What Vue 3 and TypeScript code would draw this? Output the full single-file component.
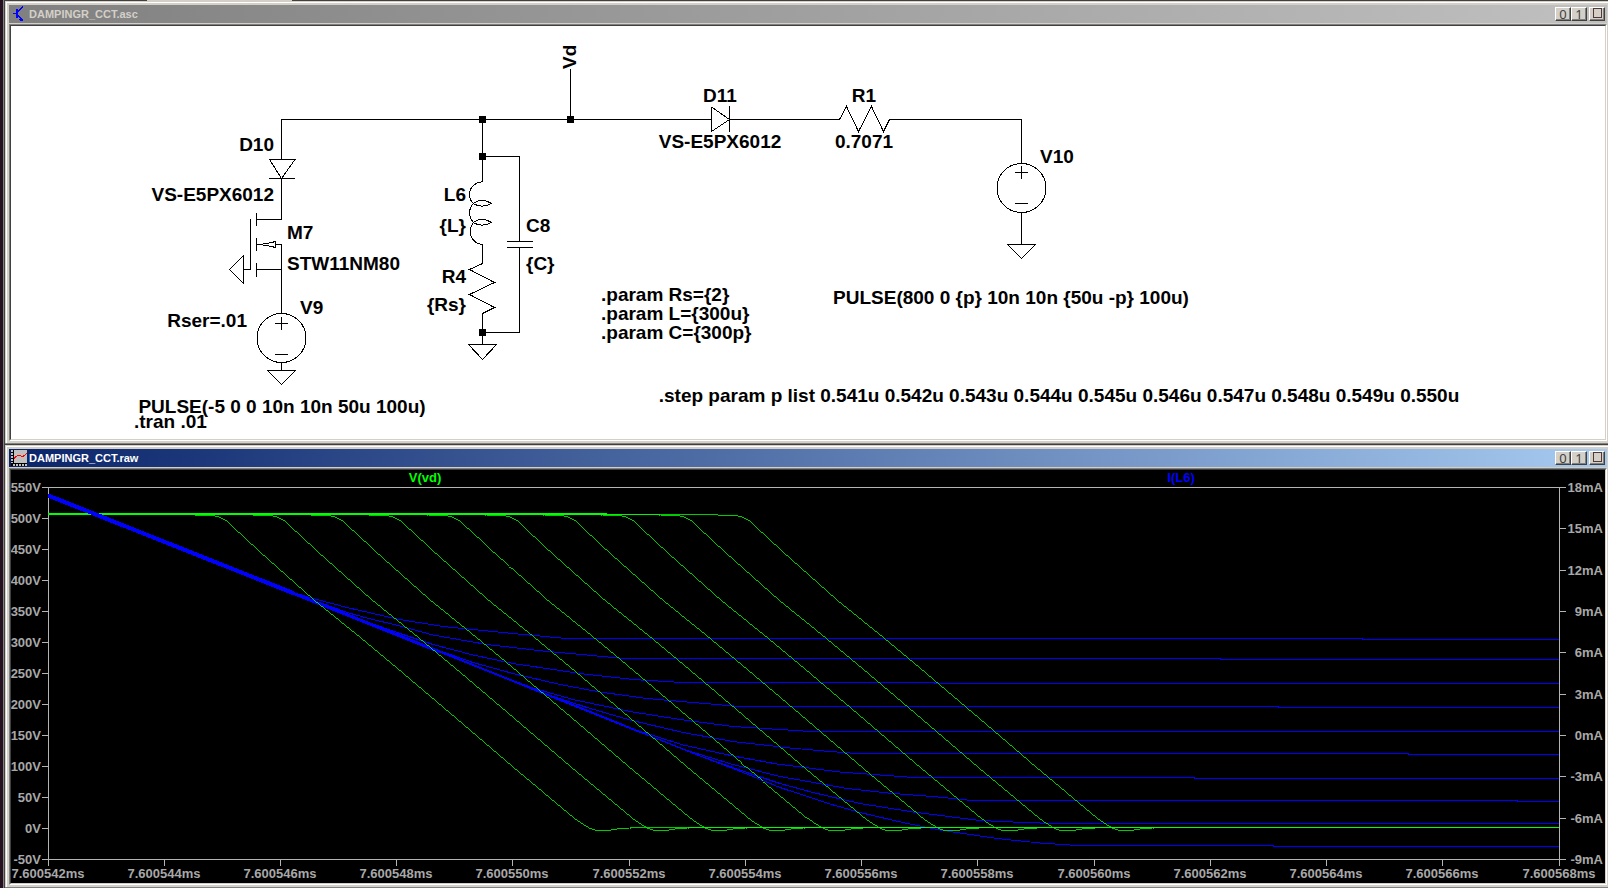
<script setup lang="ts">
type Point = [number, number]
type Anchor = 'start' | 'middle' | 'end'

interface Label {
  text: string
  x: number
  y: number
  anchor: Anchor
}

const labels: Label[] = [
  { text: 'D10', x: 274, y: 151, anchor: 'end' },
  { text: 'VS-E5PX6012', x: 274, y: 201, anchor: 'end' },
  { text: 'M7', x: 287, y: 239, anchor: 'start' },
  { text: 'STW11NM80', x: 287, y: 270, anchor: 'start' },
  { text: 'V9', x: 300, y: 314, anchor: 'start' },
  { text: 'Rser=.01', x: 247, y: 327, anchor: 'end' },
  { text: 'PULSE(-5 0 0 10n 10n 50u 100u)', x: 282, y: 413, anchor: 'middle' },
  { text: '.tran .01', x: 134, y: 428, anchor: 'start' },
  { text: 'D11', x: 720, y: 102, anchor: 'middle' },
  { text: 'VS-E5PX6012', x: 720, y: 148, anchor: 'middle' },
  { text: 'L6', x: 466, y: 201, anchor: 'end' },
  { text: '{L}', x: 466, y: 232, anchor: 'end' },
  { text: 'C8', x: 526, y: 232, anchor: 'start' },
  { text: '{C}', x: 526, y: 270, anchor: 'start' },
  { text: 'R4', x: 466, y: 283, anchor: 'end' },
  { text: '{Rs}', x: 466, y: 311, anchor: 'end' },
  { text: '.param Rs={2}', x: 601, y: 301, anchor: 'start' },
  { text: '.param L={300u}', x: 601, y: 320, anchor: 'start' },
  { text: '.param C={300p}', x: 601, y: 339, anchor: 'start' },
  { text: 'R1', x: 864, y: 102, anchor: 'middle' },
  { text: '0.7071', x: 864, y: 148, anchor: 'middle' },
  { text: 'V10', x: 1040, y: 163, anchor: 'start' },
  { text: 'PULSE(800 0 {p} 10n 10n {50u -p} 100u)', x: 1011, y: 304, anchor: 'middle' },
  {
    text: '.step param p list 0.541u 0.542u 0.543u 0.544u 0.545u 0.546u 0.547u 0.548u 0.549u 0.550u',
    x: 1059,
    y: 402,
    anchor: 'middle',
  },
]

const junctions: Point[] = [
  [479, 116],
  [567, 116],
  [479, 153],
  [479, 329],
]

const LEFT = 48
const RIGHT = 1559
const TOP = 487
const BOTTOM = 859

const voltTicks = Array.from({ length: 13 }, (_, i) => ({ text: `${550 - 50 * i}V`, y: TOP + 31 * i }))
const ampTicks = Array.from({ length: 10 }, (_, i) => ({
  text: `${18 - 3 * i}mA`,
  y: Math.round(TOP + ((BOTTOM - TOP) * i) / 9),
}))
const timeTicks = Array.from({ length: 14 }, (_, i) => ({
  text: `7.6005${42 + 2 * i}ms`,
  x: Math.floor(LEFT + ((RIGHT - LEFT) * i) / 13),
}))

const toPoints = (pts: Point[]) => pts.map(([x, y]) => `${x.toFixed(1)},${y}`).join(' ')

const fall: Point[] = [
  [195, 514.5], [196, 515.5], [213, 515.5], [219, 517], [227, 521], [234, 528], [244, 537], [260, 552],
  [278, 568], [314, 600], [361, 638], [397, 668], [450, 713], [513, 767], [574, 818], [581, 823],
  [590, 828.5], [596, 830.5], [608, 830.5], [617, 829], [629, 828.5], [630, 827.5],
]
const stepShift = (RIGHT - LEFT) / 26
const voltTraces = Array.from({ length: 10 }, (_, k) =>
  toPoints([
    [LEFT, 514.5],
    ...fall.map(([x, y]): Point => [x + k * stepShift, y]),
    [RIGHT, 827.5],
  ]),
)

const ampTraces = ([
  [[280, 588], [293, 592.5], [317, 599.5], [347, 607.5], [397, 619], [443, 626.5], [513, 633.5], [566, 638.5], [1362, 638.5], [1363, 639.5], [RIGHT, 639.5]],
  [[300, 596], [317, 601.5], [347, 612.5], [367, 618], [400, 626], [433, 635], [487, 644.5], [543, 651], [587, 655], [623, 658.5], [1220, 658.5], [1221, 659.5], [RIGHT, 659.5]],
  [[340, 612], [370, 623], [400, 633.5], [433, 644.5], [473, 655], [513, 663.5], [580, 673.5], [633, 679.5], [682, 682.5], [934, 682.5], [935, 683.5], [RIGHT, 683.5]],
  [[400, 636], [443, 652], [473, 662.5], [513, 673.5], [560, 684.5], [600, 692], [647, 698.5], [693, 702.5], [740, 706.5], [1278, 706.5], [1279, 707.5], [RIGHT, 707.5]],
  [[440, 652], [513, 680.5], [533, 688], [573, 699.5], [630, 711.5], [680, 719.5], [733, 726.5], [780, 729.5], [811, 731.5], [RIGHT, 731.5]],
  [[500, 676], [540, 692], [587, 707.5], [630, 720], [683, 732.5], [733, 741.5], [790, 748], [830, 751.5], [857, 753.5], [1408, 753.5], [1409, 754.5], [RIGHT, 754.5]],
  [[580, 708], [633, 729], [683, 745], [733, 756], [777, 764], [840, 772], [880, 775], [914, 777.5], [1194, 777.5], [1195, 778.5], [RIGHT, 778.5]],
  [[620, 724], [687, 750.5], [733, 764.5], [780, 776.5], [847, 788.5], [893, 793.5], [933, 796.5], [972, 800.5], [1517, 800.5], [1518, 801.5], [RIGHT, 801.5]],
  [[640, 732], [700, 756], [750, 773.5], [780, 783.5], [813, 792.5], [860, 803.5], [913, 812], [980, 820.5], [1013, 822], [1053, 823.5], [RIGHT, 823.5]],
  [[640, 732], [700, 756], [737, 770], [780, 787.5], [830, 804], [860, 812.5], [907, 823.5], [940, 830], [997, 838.5], [1040, 843], [1078, 845.5], [1273, 845.5], [1274, 846.5], [RIGHT, 846.5]],
] as Point[][]).map(toPoints)

const windowButtons = ['0', '1']
</script>

<template>
  <main class="workspace">
    <section class="window">
      <header class="title-bar inactive">
        <svg class="title-icon" viewBox="0 0 16 16" shape-rendering="crispEdges" aria-hidden="true">
          <path d="M2 7.5h3M7 5.5l5-5M7 9.5l5 5" class="transistor" />
          <path d="M5 3h2v9h-2zM9 13v-1h2v1h1v2h-3v-1h-1v-1z" fill="#0000ff" />
        </svg>
        <h1 class="title">DAMPINGR_CCT.asc</h1>
        <div class="controls">
          <button v-for="b in windowButtons" :key="b" type="button">{{ b }}</button>
          <button type="button" class="close" aria-label="Close"><span class="box"></span></button>
        </div>
      </header>
      <div class="client">
        <svg class="canvas schematic" viewBox="11 26 1594 413" role="img" aria-label="Circuit schematic">
          <g class="wires">
            <path d="M281.5 159.5V119.5H711.5M570.5 69V119.5M729.5 119.5H839.5l7-13l12 25l13-25l12 25l6-12H1021.5V163.5" />
            <path d="M269 159.5H295L281.5 178.5L269.5 159.5M269 178.5H295M281.5 178.5V219.5H256.5M256.5 213V226" />
            <path d="M250.5 219V269.5H243.5M256.5 238V251M256.5 263V277M256.5 269.5H281.5" />
            <path d="M256.5 244.5H260L271.5 242.5L275.5 241.5V247.5L271.5 246.5L260 244.5M275.5 244.5H281.5V313" />
            <path d="M243.5 255.5V283.5L229.5 269.5Z" />
            <circle cx="281.5" cy="338" r="24.5" />
            <path d="M275 323.5H288M281.5 317V330M275 354.5H288M281.5 362V370.5M267.5 370.5H295.5L281.5 384.5Z" />
            <path d="M482.5 119.5V181.5C467 184 467 198 474 204Q482 208.500 491.500 203.500Q482 197.500 474 203C468 209 468 217 474 223Q482 227.500 491.500 222.500Q482 216.500 474 222C467 230 470 243 482.5 244.500V263.500l-13 6l25 13l-25 12l25 13l-12 6V344.500" />
            <path d="M468.5 344.5H496.5L482.5 359.5Z" />
            <path d="M482.5 156.5H519.5V241.5M507 241.5H533M507 247.5H533M519.5 247.5V332.5H482.5" />
            <path d="M711.5 107V131.5L729.5 119.5L711.5 107M729.5 106V132" />
            <circle cx="1021.5" cy="188" r="24.5" />
            <path d="M1015 172.5H1028M1021.5 166V179M1015 203.5H1028M1021.5 212V244.5M1007.5 244.5H1035.5L1021.5 258.5Z" />
          </g>
          <rect v-for="([x, y], i) in junctions" :key="i" :x="x" :y="y" width="7" height="7" />
          <text v-for="(l, i) in labels" :key="i" :x="l.x" :y="l.y" :text-anchor="l.anchor">{{ l.text }}</text>
          <text transform="translate(576 69) rotate(-90)">Vd</text>
        </svg>
      </div>
    </section>

    <section class="window">
      <header class="title-bar active">
        <svg class="title-icon" viewBox="0 0 16 16" shape-rendering="crispEdges" aria-hidden="true">
          <rect width="16" height="16" fill="#000000" />
          <rect x="3" width="13" height="13" fill="#c0c0c0" />
          <path d="M1 0V13M2 14.500H16" class="ruler" />
          <path d="M3 8.500L7 5L12 6.500L16 3.500" class="curve" />
        </svg>
        <h1 class="title">DAMPINGR_CCT.raw</h1>
        <div class="controls">
          <button v-for="b in windowButtons" :key="b" type="button">{{ b }}</button>
          <button type="button" class="close" aria-label="Close"><span class="box"></span></button>
        </div>
      </header>
      <div class="client">
        <svg class="canvas plot" viewBox="11 470 1594 413" role="img" aria-label="Waveform plot">
          <g class="axes">
            <rect x="48.5" y="487.5" width="1511" height="372" />
            <path v-for="t in voltTicks" :key="t.text" :d="`M42 ${t.y + 0.5}h7`" />
            <path v-for="t in ampTicks" :key="t.text" :d="`M1559 ${t.y + 0.5}h7`" />
            <path v-for="t in timeTicks" :key="t.text" :d="`M${t.x + 0.5} 859v7`" />
          </g>
          <g class="amps">
            <polyline v-for="(p, i) in ampTraces" :key="i" :points="p" />
            <path d="M48 495.500L293 593" class="w4" />
            <path d="M290 592L400 636L440 652" class="w3" />
            <path d="M438 651L513 681L640 732" class="w2" />
          </g>
          <g class="volts">
            <polyline v-for="(p, i) in voltTraces" :key="i" :points="p" />
            <path d="M48 514H607" class="w2" />
          </g>
          <path d="M48 495.500L110 520" class="overlap" />
          <text v-for="t in voltTicks" :key="t.text" x="41" :y="t.y + 5" text-anchor="end">{{ t.text }}</text>
          <text v-for="t in ampTicks" :key="t.text" x="1603" :y="t.y + 5" text-anchor="end">{{ t.text }}</text>
          <text v-for="t in timeTicks" :key="t.text" :x="t.x" y="878" text-anchor="middle">{{ t.text }}</text>
          <text x="425" y="482" text-anchor="middle" class="volt-name">V(vd)</text>
          <text x="1181" y="482" text-anchor="middle" class="amp-name">I(L6)</text>
        </svg>
      </div>
    </section>
  </main>
</template>

<style>
html,
body {
  margin: 0;
  background: #24101f;
}
</style>

<style scoped>
.workspace {
  display: flex;
  flex-direction: column;
  gap: 1px;
  margin-left: 3px;
  padding: 1px 0 0 1px;
  border-left: 1px solid #808080;
  background: linear-gradient(#d4d0c8, #d4d0c8) 143px 0 / 145px 1px no-repeat #404040;
  font-family: "Liberation Sans", Arial, sans-serif;
}

.window {
  padding: 4px 1px 2px 4px;
  border-bottom: 1px solid #808080;
  background: #d4d0c8;
  box-shadow: inset 1px 1px 0 #d4d0c8, inset 2px 2px 0 #ffffff;
}

.title-bar {
  display: flex;
  align-items: center;
  height: 18px;
  margin-bottom: 1px;
  padding: 0 2px;
}

.inactive {
  background: linear-gradient(to right, #808080, #c0c0c0);
  color: #d4d0c8;
}

.active {
  background: linear-gradient(to right, #0a246a, #a6caf0);
  color: #ffffff;
}

.title-icon {
  width: 16px;
  height: 16px;
  margin-right: 2px;
}

.transistor {
  fill: none;
  stroke: #0000ff;
  stroke-width: 1;
}

.ruler {
  fill: none;
  stroke: #c0c0c0;
  stroke-width: 2;
  stroke-dasharray: 2 1;
}

.curve {
  fill: none;
  stroke: #ff0000;
  stroke-width: 1;
}

.title {
  flex: 1;
  margin: 0;
  font-size: 11px;
  line-height: 18px;
  font-weight: bold;
}

.controls {
  display: flex;
}

.controls button {
  display: flex;
  justify-content: center;
  align-items: center;
  width: 16px;
  height: 14px;
  padding: 0;
  border: 1px solid;
  border-color: #ffffff #404040 #404040 #ffffff;
  box-shadow: inset -1px -1px 0 #808080;
  background: #d4d0c8;
  color: #404040;
  font-family: "Noto Sans", sans-serif;
  font-size: 13px;
  line-height: 12px;
}

.controls .close {
  align-items: flex-start;
  margin-left: 2px;
}

.box {
  width: 7px;
  height: 8px;
  border: 1px solid #503838;
}

.client {
  border: 1px solid;
  border-color: #808080 #ffffff #ffffff #808080;
}

.canvas {
  display: block;
  box-sizing: border-box;
  width: 100%;
  height: auto;
  border: 1px solid;
  border-color: #404040 #d4d0c8 #d4d0c8 #404040;
  font-weight: bold;
}

.schematic {
  background: #ffffff;
  font-size: 19px;
}

.wires {
  fill: none;
  stroke: #000000;
  stroke-width: 1;
  shape-rendering: crispEdges;
}

.plot {
  background: #000000;
  font-size: 13px;
  fill: #a8a8a8;
}

.axes,
.volts,
.amps,
.overlap {
  fill: none;
  stroke-width: 1;
  shape-rendering: crispEdges;
}

.axes {
  stroke: #b4b4b4;
}

.volts {
  stroke: #00ff00;
}

.volts polyline {
  stroke-width: 0.8;
}

.amps {
  stroke: #0000ff;
}

.overlap {
  stroke: #0000ff;
  stroke-width: 4;
}

.w4 {
  stroke-width: 4;
}

.w3 {
  stroke-width: 3;
}

.w2 {
  stroke-width: 2;
}

.volt-name {
  fill: #00ff00;
}

.amp-name {
  fill: #0000ff;
}
</style>
